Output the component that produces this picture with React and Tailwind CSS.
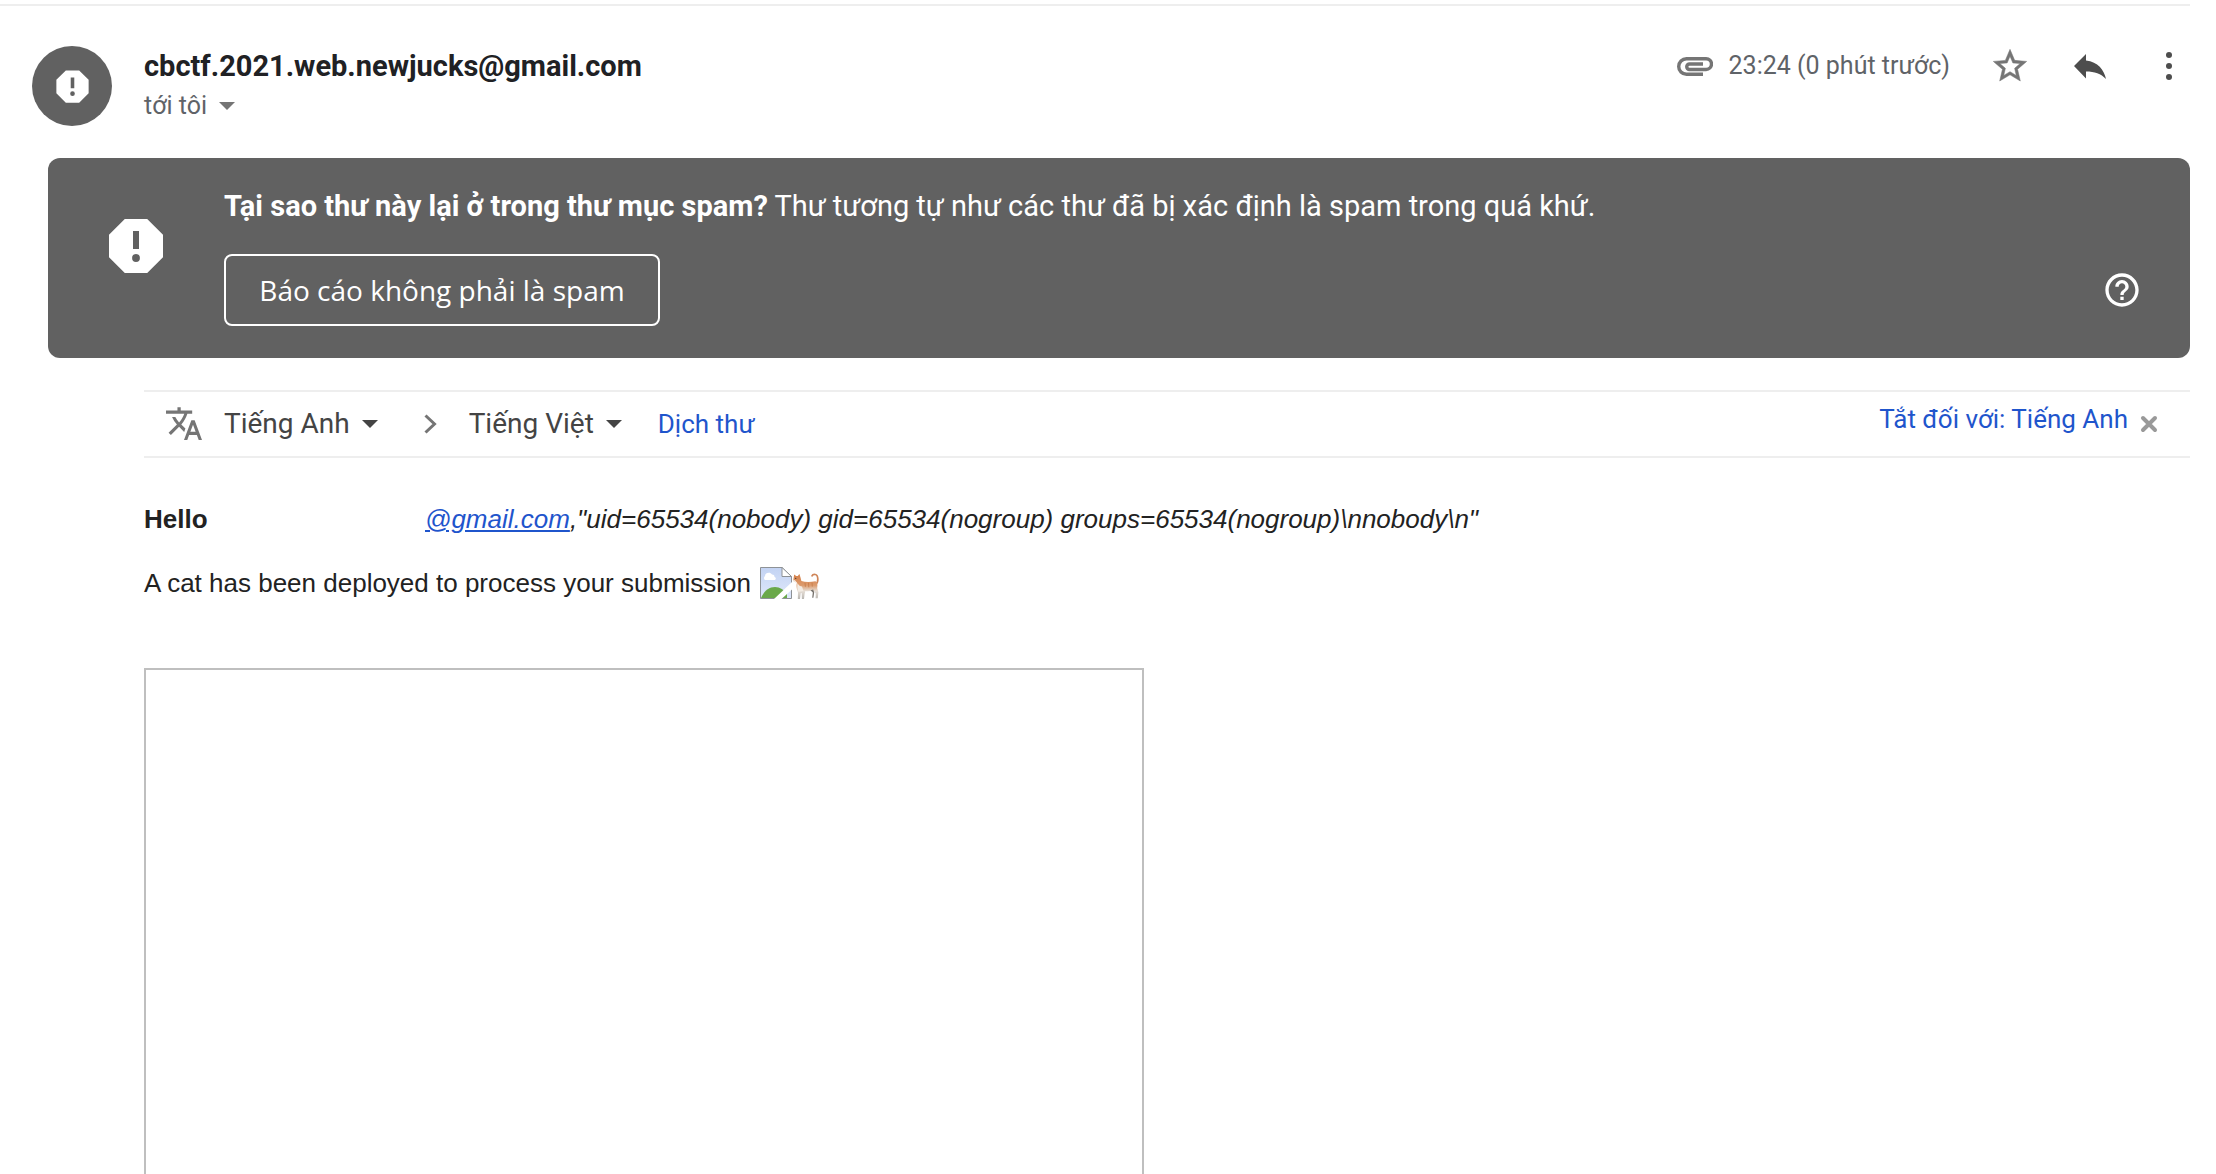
function Octagon({ className }) {
  return (
    <svg viewBox="0 0 24 24" className={className} fill="currentColor" aria-hidden="true">
      <path d="M15.73 3H8.27L3 8.27v7.46L8.27 21h7.46L21 15.73V8.27L15.73 3zM12 17.3a1.3 1.3 0 1 1 0-2.6 1.3 1.3 0 0 1 0 2.6zm1-4.3h-2V7h2v6z" />
    </svg>
  );
}

function Caret({ className }) {
  return (
    <svg viewBox="0 0 16 8" className={className} fill="currentColor" aria-hidden="true">
      <path d="M0 0h16L8 8z" />
    </svg>
  );
}

function Clip() {
  return (
    <svg viewBox="0 0 36 19" className="h-[19px] w-9 text-[#757575]" fill="none" stroke="currentColor" strokeWidth="3.400" aria-hidden="true">
      <path d="M26 17.300H9.500a7.800 7.800 0 0 1 0-15.600h19.600a5.200 5.200 0 0 1 0 10.800H12.500a2.700 2.700 0 0 1 0-5.500H26" />
    </svg>
  );
}

function Star() {
  return (
    <svg viewBox="0 0 24 24" className="size-10 text-[#757575]" fill="currentColor" stroke="currentColor" strokeWidth=".3" aria-hidden="true">
      <path d="M22 9.24l-7.19-.62L12 2 9.19 8.63 2 9.24l5.46 4.73L5.82 21 12 17.27 18.18 21l-1.63-7.03L22 9.24zM12 15.4l-3.76 2.27 1-4.28-3.32-2.88 4.38-.38L12 6.1l1.71 4.04 4.38.38-3.32 2.88 1 4.28L12 15.4z" />
    </svg>
  );
}

function Reply() {
  return (
    <svg viewBox="0 0 32 25" className="h-[25px] w-8 text-[#4d4d4d]" fill="currentColor" aria-hidden="true">
      <path d="M12 6.6V0L0 12l12 12.4V17.400c8.500 0 15 1.900 20 7.600C30 16 24 8 12 6.600z" />
    </svg>
  );
}

function More() {
  return (
    <svg viewBox="0 0 6 28" className="h-7 w-[6px] text-[#4d4d4d]" fill="currentColor" aria-hidden="true">
      <circle cx="3" cy="3" r="3" />
      <circle cx="3" cy="14" r="3" />
      <circle cx="3" cy="25" r="3" />
    </svg>
  );
}

function Help() {
  return (
    <svg viewBox="0 0 24 24" className="size-10" fill="currentColor" aria-hidden="true">
      <path d="M11 18h2v-2h-2v2zm1-16C6.480 2 2 6.480 2 12s4.480 10 10 10 10-4.480 10-10S17.520 2 12 2zm0 18c-4.410 0-8-3.590-8-8s3.590-8 8-8 8 3.590 8 8-3.590 8-8 8zm0-14c-2.210 0-4 1.790-4 4h2c0-1.100.9-2 2-2s2 .9 2 2c0 2-3 1.750-3 5h2c0-2.250 3-2.500 3-5 0-2.210-1.790-4-4-4z" />
    </svg>
  );
}

function Translate() {
  return (
    <svg viewBox="0 0 22 20.500" className="h-[34px] w-9 text-[#757575]" fill="currentColor" aria-hidden="true">
      <path d="M11.870 13.070l-2.540-2.510.03-.03c1.740-1.940 2.980-4.170 3.710-6.530H16V2H9V0H7v2H0v1.990h11.170C10.500 5.920 9.440 7.750 8 9.350 7.070 8.320 6.300 7.190 5.690 6h-2c.73 1.630 1.730 3.170 2.980 4.560l-5.090 5.020L3 17l5-5 3.110 3.110.76-2.040zM17.500 8h-2L11 20h2l1.120-3h4.750L20 20h2L17.500 8zm-2.620 7l1.620-4.330L18.120 15h-3.240z" />
    </svg>
  );
}

function BrokenImage({ className }) {
  return (
    <svg viewBox="0 0 32 32" className={className} role="img" aria-label="Broken image">
      <defs>
        <linearGradient id="sky" x1="0" y1="0" x2="0" y2="1">
          <stop offset="0" stopColor="#c3d3f3" />
          <stop offset="1" stopColor="#dfe8fb" />
        </linearGradient>
      </defs>
      <path d="M.5.5H22L31.500 9.500v22H.5z" fill="url(#sky)" stroke="#8e9296" />
      <path d="M1 31c3-7 8-11 14-11 5 0 9 3 12 7v4z" fill="#6aa84a" />
      <path d="M5 13a2.500 2.500 0 0 1 0-4c0-3 5-4.500 7-1.500 2 0 2.500 1 2.500 2.500 2 .5 1.500 3 0 3z" fill="#fff" />
      <path d="M22 .5v9h9.500z" fill="#fff" stroke="#8e9296" strokeLinejoin="round" />
      <path d="M14 32L32 15v7.500L21.500 32z" fill="#fff" />
    </svg>
  );
}

function Cat({ className }) {
  return (
    <svg viewBox="0 0 26 26" className={className} role="img" aria-label="Cat">
      <defs>
        <linearGradient id="fur" x1="0" y1="0" x2="0" y2="1">
          <stop offset="0" stopColor="#d5804a" />
          <stop offset=".45" stopColor="#dc9a6c" />
          <stop offset=".68" stopColor="#e6ded6" />
          <stop offset="1" stopColor="#b9b6b1" />
        </linearGradient>
      </defs>
      <path d="M22.500 11.500c3.300-2 3-9.500-.3-10-1.700-.2-2.800.4-3.200 1.300" fill="none" stroke="#cf8558" strokeWidth="1.700" strokeLinecap="round" />
      <path d="M1.200 1.600l2 1.300h1.600L6.400 1l1.100 3.600.9 3.400c4 1.400 9 1.200 14 .3 2 .7 2.300 4 1.800 7l1.200 4-.6 6h-2.200l.2-4.800-2.600-3.200c-3 1-5.500 1.200-7.800.8l-.8 3-.6 4.900H8.900l-.2-6-1 .2-.7 5.800H4.800l.2-6.500C3.300 16 3.200 12.500 4 9.300 1.500 9.600.2 8.400.3 6.800z" fill="url(#fur)" />
      <path d="M4.500 10c1 2.500 3 3.500 4.500 3.500l1.500 4.500-5 .8C4 16 4 12.500 4.500 10z" fill="#f3ece4" />
      <path d="M.3 6.800c1.300 0 2.500.9 3.200 2.500C1.400 9.500.2 8.600.3 6.800z" fill="#f3ece4" />
      <circle cx="2.700" cy="5.400" r=".7" fill="#5a4030" />
      <path d="M12 9.800l.4 4M15.500 9.800l.3 4.500M19 9.600l.3 4" stroke="#c47a49" strokeWidth=".8" />
      <path d="M17.500 17.200l2.300 2.300-.6 5.300h1.200l.8-5.300-1-3z" fill="#77736d" />
    </svg>
  );
}

function LanguagePicker({ label, children }) {
  return (
    <button type="button" aria-label={label} className="flex items-center gap-3 text-[28px] leading-9 text-[#444]">
      <span>{children}</span>
      <Caret className="h-2 w-4" />
    </button>
  );
}

export default function App() {
  return (
    <main className="flex min-h-screen flex-col bg-white pt-1 pr-[26px] font-[Roboto,sans-serif] text-[#222]">
      <header className="flex items-start border-t-2 border-[#eee] pt-10 pl-8">
        <div className="flex size-20 shrink-0 items-center justify-center rounded-full bg-[#616161] text-white">
          <Octagon className="size-[43px]" />
        </div>
        <div className="ml-8 flex grow flex-col">
          <h3 className="text-[29px] leading-10 font-bold text-[#202124]">cbctf.2021.web.newjucks@gmail.com</h3>
          <button type="button" className="flex items-center gap-3 self-start text-[25px] leading-10 text-[#5f6368]">
            <span>tới tôi</span>
            <Caret className="h-2 w-4 text-[#757575]" />
          </button>
        </div>
        <div className="flex h-10 items-center pr-[18px]">
          <Clip />
          <time className="ml-4 text-[25px] text-[#5f6368]">23:24 (0 phút trước)</time>
          <button type="button" aria-label="Star" className="ml-10"><Star /></button>
          <button type="button" aria-label="Reply" className="ml-11"><Reply /></button>
          <button type="button" aria-label="More" className="ml-[60px]"><More /></button>
        </div>
      </header>

      <section className="mt-8 ml-12 flex rounded-xl bg-[#616161] px-[52px] py-8 text-white">
        <Octagon className="mt-5 size-[72px] shrink-0" />
        <div className="ml-[52px] grow">
          <p className="text-[29px] leading-8">
            <b className="font-bold">Tại sao thư này lại ở trong thư mục spam?</b> Thư tương tự như các thư đã bị xác định là spam trong quá khứ.
          </p>
          <button type="button" className="mt-8 h-[72px] min-w-[436px] rounded-lg border-2 border-white px-8 font-['Open_Sans',sans-serif] text-[28px] font-medium">
            Báo cáo không phải là spam
          </button>
        </div>
        <button type="button" aria-label="Help" className="-mr-1 mb-4 self-end"><Help /></button>
      </section>

      <div className="mt-8 ml-36 flex h-[68px] items-center border-y-2 border-[#eee] pl-[22px]">
        <Translate />
        <div className="ml-[22px]"><LanguagePicker label="Source language">Tiếng Anh</LanguagePicker></div>
        <svg viewBox="0 0 13 20" className="mr-8 ml-[46px] h-5 w-[13px]" fill="none" stroke="#757575" strokeWidth="3" aria-hidden="true">
          <path d="M1.500 1.500L10.500 10l-9 8.500" />
        </svg>
        <LanguagePicker label="Target language">Tiếng Việt</LanguagePicker>
        <a href="#translate" className="ml-9 text-[26px] text-[#1f55cc]">Dịch thư</a>
        <a href="#turn-off" className="mb-[10px] ml-auto text-[26px] leading-8 text-[#1f55cc]">Tắt đối với: Tiếng Anh</a>
        <button type="button" aria-label="Close" className="mr-8 ml-3">
          <svg viewBox="0 0 18 18" className="size-[18px]" fill="none" stroke="#999" strokeWidth="4" strokeLinecap="round" aria-hidden="true">
            <path d="M3 3l12 12M15 3L3 15" />
          </svg>
        </button>
      </div>

      <article className="ml-36 flex grow flex-col pt-[43px] font-['Liberation_Sans',Arial,sans-serif] text-[26px] leading-9">
        <p className="flex">
          <b className="w-[281px]">Hello</b>
          <i>
            <a href="mailto:@gmail.com" className="text-[#1f55cc] underline">@gmail.com</a>
            {',"uid=65534(nobody) gid=65534(nogroup) groups=65534(nogroup)\\nnobody\\n"'}
          </i>
        </p>
        <p className="mt-7 flex items-center">
          A cat has been deployed to process your submission
          <span className="ml-[9px] flex items-end gap-px"><BrokenImage className="size-8" /><Cat className="size-[26px]" /></span>
        </p>
        <div className="mt-[67px] w-full max-w-[1000px] grow border-2 border-b-0 border-[#bfbfbf]" />
      </article>
    </main>
  );
}
